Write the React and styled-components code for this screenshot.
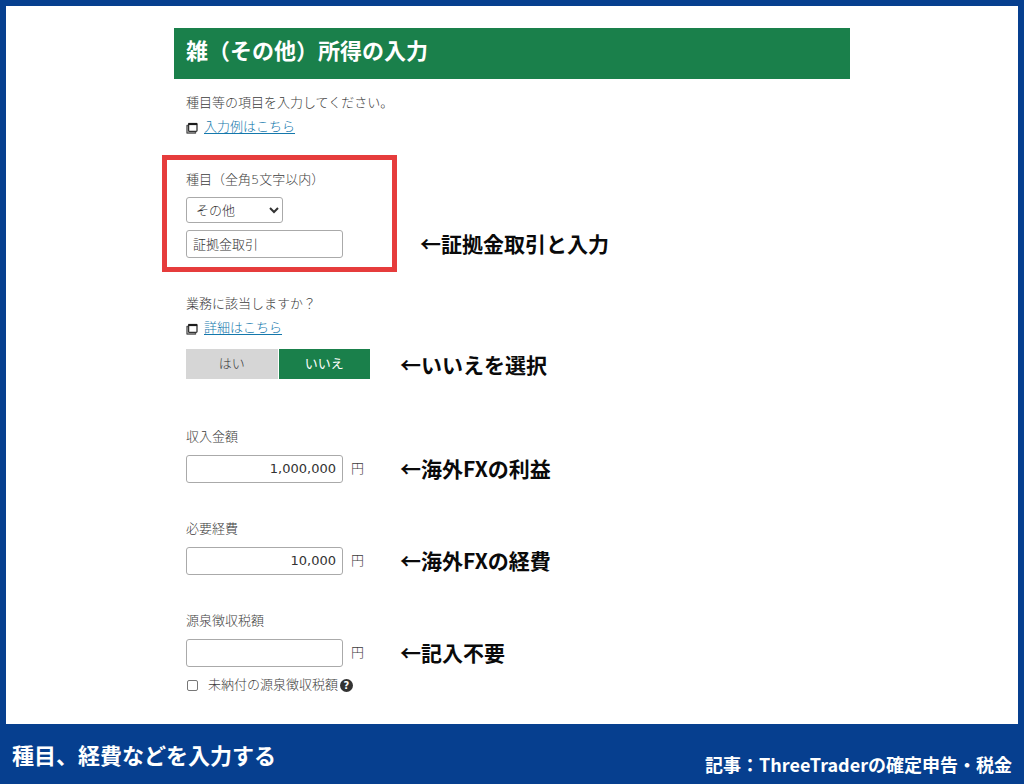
import React, { useState } from "react";
import styled, { createGlobalStyle } from "styled-components";

const GlobalStyle = createGlobalStyle`
  *, *::before, *::after { box-sizing: border-box; }
  body {
    margin: 0;
    background: #063f8f;
    font-family: "DejaVu Sans", "Noto Sans CJK JP", sans-serif;
    font-size: 13px;
    line-height: 20px;
    color: #3c3c3c;
  }
`;

const Page = styled.div`
  min-height: 100vh;
  display: flex;
  flex-direction: column;
`;

const Panel = styled.main`
  flex: 1;
  margin: 6px 6px 0;
  padding: 22px 0 28px;
  background: #fff;
`;

const Form = styled.form`
  max-width: 676px;
  margin: 0 auto;
`;

const Title = styled.h1`
  margin: 0;
  padding: 7px 12px 16px;
  background: #1a804b;
  color: #fff;
  font-family: "Noto Sans CJK JP", sans-serif;
  font-size: 22px;
  line-height: 28px;
  font-weight: 700;
`;

const Body = styled.div`
  padding: 14px 12px 0;
  font-weight: 300;
`;

const Text = styled.p`
  margin: 0;
`;

const LinkLine = styled.div`
  display: flex;
  align-items: center;
  gap: 6px;
  margin-top: 4px;

  svg {
    margin-top: 2px;
  }
`;

const Link = styled.a`
  color: #1478ac;
  text-decoration: underline;
  text-underline-offset: 2px;
`;

const Row = styled.div`
  display: flex;
  align-items: flex-end;
  gap: ${(p) => p.$gap || 30}px;
`;

const Highlight = styled.div`
  display: flex;
  flex-direction: column;
  align-items: flex-start;
  gap: 7px;
  width: 235px;
  margin: 18px 0 0 -24px;
  padding: 10px 19px 9px;
  border: 5px solid #e63c3c;
`;

const Note = styled.p`
  margin: 0;
  padding-bottom: ${(p) => (p.$framed ? 17 : 3)}px;
  color: #0a0a0a;
  font-family: "Noto Sans CJK JP", sans-serif;
  font-size: 21px;
  line-height: 24px;
  font-weight: 700;
  white-space: nowrap;
`;

const Select = styled.select`
  width: 97px;
  height: 26px;
  padding: 0 0 0 5px;
  border: 1px solid #aaa;
  border-radius: 3px;
  background: #fff;
  color: #333;
  font: inherit;
`;

const Input = styled.input`
  width: 157px;
  height: 28px;
  padding: 0 6px 2px;
  border: 1px solid #aaa;
  border-radius: 3px;
  background: #fff;
  color: #333;
  font: inherit;
  font-weight: ${(p) => (p.$numeric ? 400 : 300)};
  text-align: ${(p) => (p.$numeric ? "right" : "left")};
`;

const Question = styled.section`
  margin-top: 22px;
  margin-bottom: 48px;
`;

const Control = styled.div`
  display: flex;
  align-items: center;
  gap: ${(p) => p.$gap}px;
  width: 184px;
`;

const Choices = styled(Row)`
  margin-top: 11px;
`;

const Choice = styled.button`
  flex: 1;
  height: 30px;
  padding: 0;
  border: 0;
  background: ${(p) => (p.$active ? "#1a804b" : "#d6d6d6")};
  color: ${(p) => (p.$active ? "#fff" : "#3c3c3c")};
  font: inherit;
  font-weight: ${(p) => (p.$active ? 400 : 300)};
`;

const Field = styled.div`
  display: flex;
  flex-direction: column;
  gap: 8px;

  & + & {
    margin-top: 36px;
  }
`;

const CheckLine = styled.div`
  display: flex;
  align-items: center;
  gap: 2px;
  margin-top: 8px;
`;

const CheckLabel = styled.label`
  display: flex;
  align-items: center;
  gap: 9px;
`;

const Checkbox = styled.input`
  appearance: none;
  width: 11px;
  height: 11px;
  margin: 0 1px;
  border: 1px solid #777;
  border-radius: 2px;
  background: #fff;

  &:checked {
    background: #1a804b;
  }
`;

const Help = styled.button`
  display: grid;
  place-items: center;
  width: 13px;
  height: 13px;
  padding: 0;
  border: 0;
  border-radius: 50%;
  background: #333;
  color: #fff;
  font: 700 10px/13px "DejaVu Sans", sans-serif;
`;

const Footer = styled.footer`
  display: flex;
  justify-content: space-between;
  min-height: 60px;
  padding: 16px 12px 8px;
  color: #fff;
  font-family: "Noto Sans CJK JP", sans-serif;
  font-weight: 700;
`;

const Caption = styled.p`
  margin: 0;
  font-size: 22px;
  line-height: 28px;
`;

const Source = styled.p`
  align-self: flex-end;
  margin: 0;
  font-size: 18px;
  line-height: 24px;
`;

function WindowIcon() {
  return (
    <svg width="12" height="12" viewBox="0 0 12 12" fill="none" aria-hidden="true">
      <path d="M2 3.5H1V11H9.5V10" stroke="#555" strokeWidth="1.4" strokeLinejoin="round" />
      <rect x="2.6" y="1.6" width="8.4" height="7.8" rx="0.8" fill="#fff" stroke="#333" strokeWidth="1.3" />
      <path d="M2.4 2H11.2" stroke="#1c1c1c" strokeWidth="2.2" />
    </svg>
  );
}

function AmountField({ id, label, value, note }) {
  return (
    <Field>
      <label htmlFor={id}>{label}</label>
      <Row>
        <Control $gap={8}>
          <Input id={id} $numeric inputMode="numeric" defaultValue={value} />
          <span>円</span>
        </Control>
        <Note>{note}</Note>
      </Row>
    </Field>
  );
}

export default function App() {
  const [isBusiness, setIsBusiness] = useState(false);

  return (
    <Page lang="ja">
      <GlobalStyle />
      <Panel>
        <Form onSubmit={(e) => e.preventDefault()}>
          <Title>雑（その他）所得の入力</Title>
          <Body>
            <Text>種目等の項目を入力してください。</Text>
            <LinkLine>
              <WindowIcon />
              <Link href="#example">入力例はこちら</Link>
            </LinkLine>

            <Row $gap={23}>
              <Highlight>
                <label htmlFor="category">種目（全角5文字以内）</label>
                <Select id="category" defaultValue="other">
                  <option value="other">その他</option>
                </Select>
                <Input aria-label="種目名" defaultValue="証拠金取引" maxLength={5} />
              </Highlight>
              <Note $framed>←証拠金取引と入力</Note>
            </Row>

            <Question>
              <Text id="business">業務に該当しますか？</Text>
              <LinkLine>
                <WindowIcon />
                <Link href="#details">詳細はこちら</Link>
              </LinkLine>
              <Choices>
                <Control $gap={1} role="group" aria-labelledby="business">
                  <Choice
                    type="button"
                    $active={isBusiness}
                    aria-pressed={isBusiness}
                    onClick={() => setIsBusiness(true)}
                  >
                    はい
                  </Choice>
                  <Choice
                    type="button"
                    $active={!isBusiness}
                    aria-pressed={!isBusiness}
                    onClick={() => setIsBusiness(false)}
                  >
                    いいえ
                  </Choice>
                </Control>
                <Note>←いいえを選択</Note>
              </Choices>
            </Question>

            <AmountField id="income" label="収入金額" value="1,000,000" note="←海外FXの利益" />
            <AmountField id="expense" label="必要経費" value="10,000" note="←海外FXの経費" />
            <AmountField id="withheld" label="源泉徴収税額" value="" note="←記入不要" />

            <CheckLine>
              <CheckLabel>
                <Checkbox type="checkbox" />
                未納付の源泉徴収税額
              </CheckLabel>
              <Help type="button" aria-label="ヘルプ">?</Help>
            </CheckLine>
          </Body>
        </Form>
      </Panel>
      <Footer>
        <Caption>種目、経費などを入力する</Caption>
        <Source>記事：ThreeTraderの確定申告・税金</Source>
      </Footer>
    </Page>
  );
}
